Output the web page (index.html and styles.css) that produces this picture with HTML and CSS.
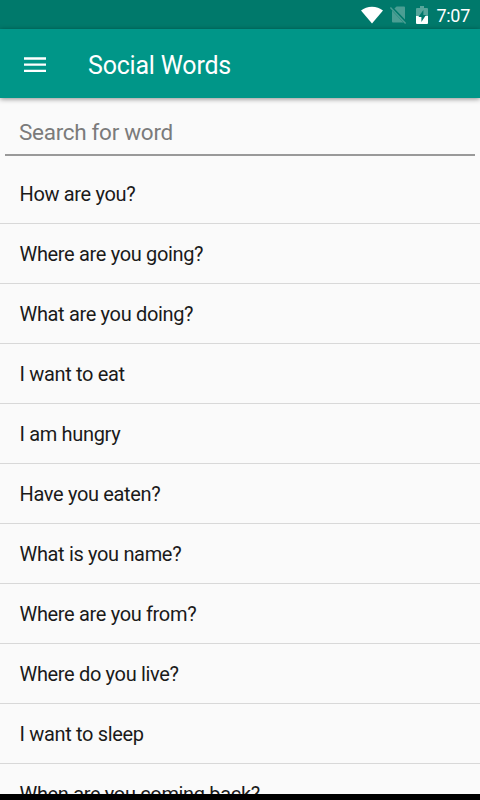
FILE: index.html
```html
<!DOCTYPE html>
<html lang="en">
  <head>
    <meta charset="UTF-8" />
    <meta name="viewport" content="width=device-width, initial-scale=1.0" />
    <title>Social Words</title>
    <link rel="stylesheet" href="styles.css">
  </head>
  <body>
    <div class="screen">
      <!-- Status Bar -->
      <div class="status-bar">
        <svg class="wifi" width="22" height="18" viewBox="0 0 22 18">
          <path d="M0 4.6C3 2.1 6.8 .8 11 .8s8 1.3 11 3.8L11 17.6z" fill="#fff" />
        </svg>
        <svg class="no-sim" width="18" height="20" viewBox="0 0 18 20">
          <path d="M5.4 3.6L7.6 1.6H15Q16 1.6 16 2.6V14.4zM3 5.4L14.4 17.4H4Q3 17.4 3 16.4z" fill="#4a9e93" />
          <path d="M1.4 2.6L16.6 18.4" stroke="#4a9e93" stroke-width="1.5" />
        </svg>
        <svg class="battery" width="12" height="18" viewBox="0 0 12 18">
          <path d="M4 0H8V2H11Q12 2 12 3V10H0V3Q0 2 1 2H4z" fill="#56a59b" />
          <path d="M0 10H12V17Q12 18 11 18H1Q0 18 0 17z" fill="#fff" />
          <path d="M7.4 4L2.4 11H5.4V16L10 9H7.4z" fill="#00796b" />
        </svg>
        <span class="clock">7:07</span>
      </div>

      <!-- Toolbar -->
      <header class="toolbar">
        <svg class="menu" width="23" height="16" viewBox="0 0 23 16">
          <path d="M0 1.5H22M0 7.7H22M0 13.9H22" stroke="#fff" stroke-width="2.3" />
        </svg>
        <h1>Social Words</h1>
      </header>

      <!-- Word List -->
      <main>
        <input type="text" class="search-bar" placeholder="Search for word" />
        <ul class="word-list">
          <li>How are you?</li>
          <li>Where are you going?</li>
          <li>What are you doing?</li>
          <li>I want to eat</li>
          <li>I am hungry</li>
          <li>Have you eaten?</li>
          <li>What is you name?</li>
          <li>Where are you from?</li>
          <li>Where do you live?</li>
          <li>I want to sleep</li>
          <li>When are you coming back?</li>
        </ul>
      </main>
      <div class="bottom-bar"></div>
    </div>
  </body>
</html>
```
FILE: styles.css
```css
* {
  box-sizing: border-box;
}
body {
  font-family: Roboto, sans-serif;
  margin: 0;
  background-color: #fafafa;
}
.screen {
  display: flex;
  flex-direction: column;
  height: 800px;
  overflow: hidden;
}
.status-bar {
  display: flex;
  flex: none;
  align-items: center;
  justify-content: flex-end;
  height: 29px;
  padding: 0 10px 0 0;
  background-color: #00796b;
  color: #fff;
}
.no-sim {
  margin-left: 6px;
}
.battery {
  margin-left: 9px;
}
.clock {
  margin-left: 8px;
  padding-top: 2px;
  font-size: 18px;
  letter-spacing: -0.3px;
  line-height: 27px;
}
.toolbar {
  display: flex;
  flex: none;
  align-items: center;
  height: 69px;
  padding: 2px 24px 0;
  background-color: #009688;
  color: #fff;
  box-shadow: 0 1px 5px rgba(0, 0, 0, 0.45);
}
.toolbar h1 {
  margin: 1px 0 0 41px;
  font-size: 25px;
  font-weight: 400;
  letter-spacing: -0.2px;
}
.toolbar,
.status-bar {
  z-index: 1;
}
main {
  flex: 1;
  min-height: 0;
  overflow: hidden;
  padding-top: 12px;
}
.search-bar {
  display: block;
  width: 470px;
  height: 46px;
  margin: 0 5px 8px;
  padding: 0 14px;
  border: 0;
  border-bottom: 2px solid #999;
  background: none;
  font-family: inherit;
  font-size: 22.5px;
  letter-spacing: -0.3px;
  outline: none;
}
.search-bar::placeholder {
  color: #7b7b7b;
}
.word-list {
  list-style: none;
  margin: 0;
  padding: 0;
}
.word-list li {
  height: 60px;
  padding: 0 19.5px;
  border-bottom: 1px solid #d8d8d8;
  color: #1a1a1a;
  font-size: 20px;
  letter-spacing: -0.34px;
  line-height: 61.5px;
}
.bottom-bar {
  flex: none;
  height: 6px;
  background-color: #000;
}
```
